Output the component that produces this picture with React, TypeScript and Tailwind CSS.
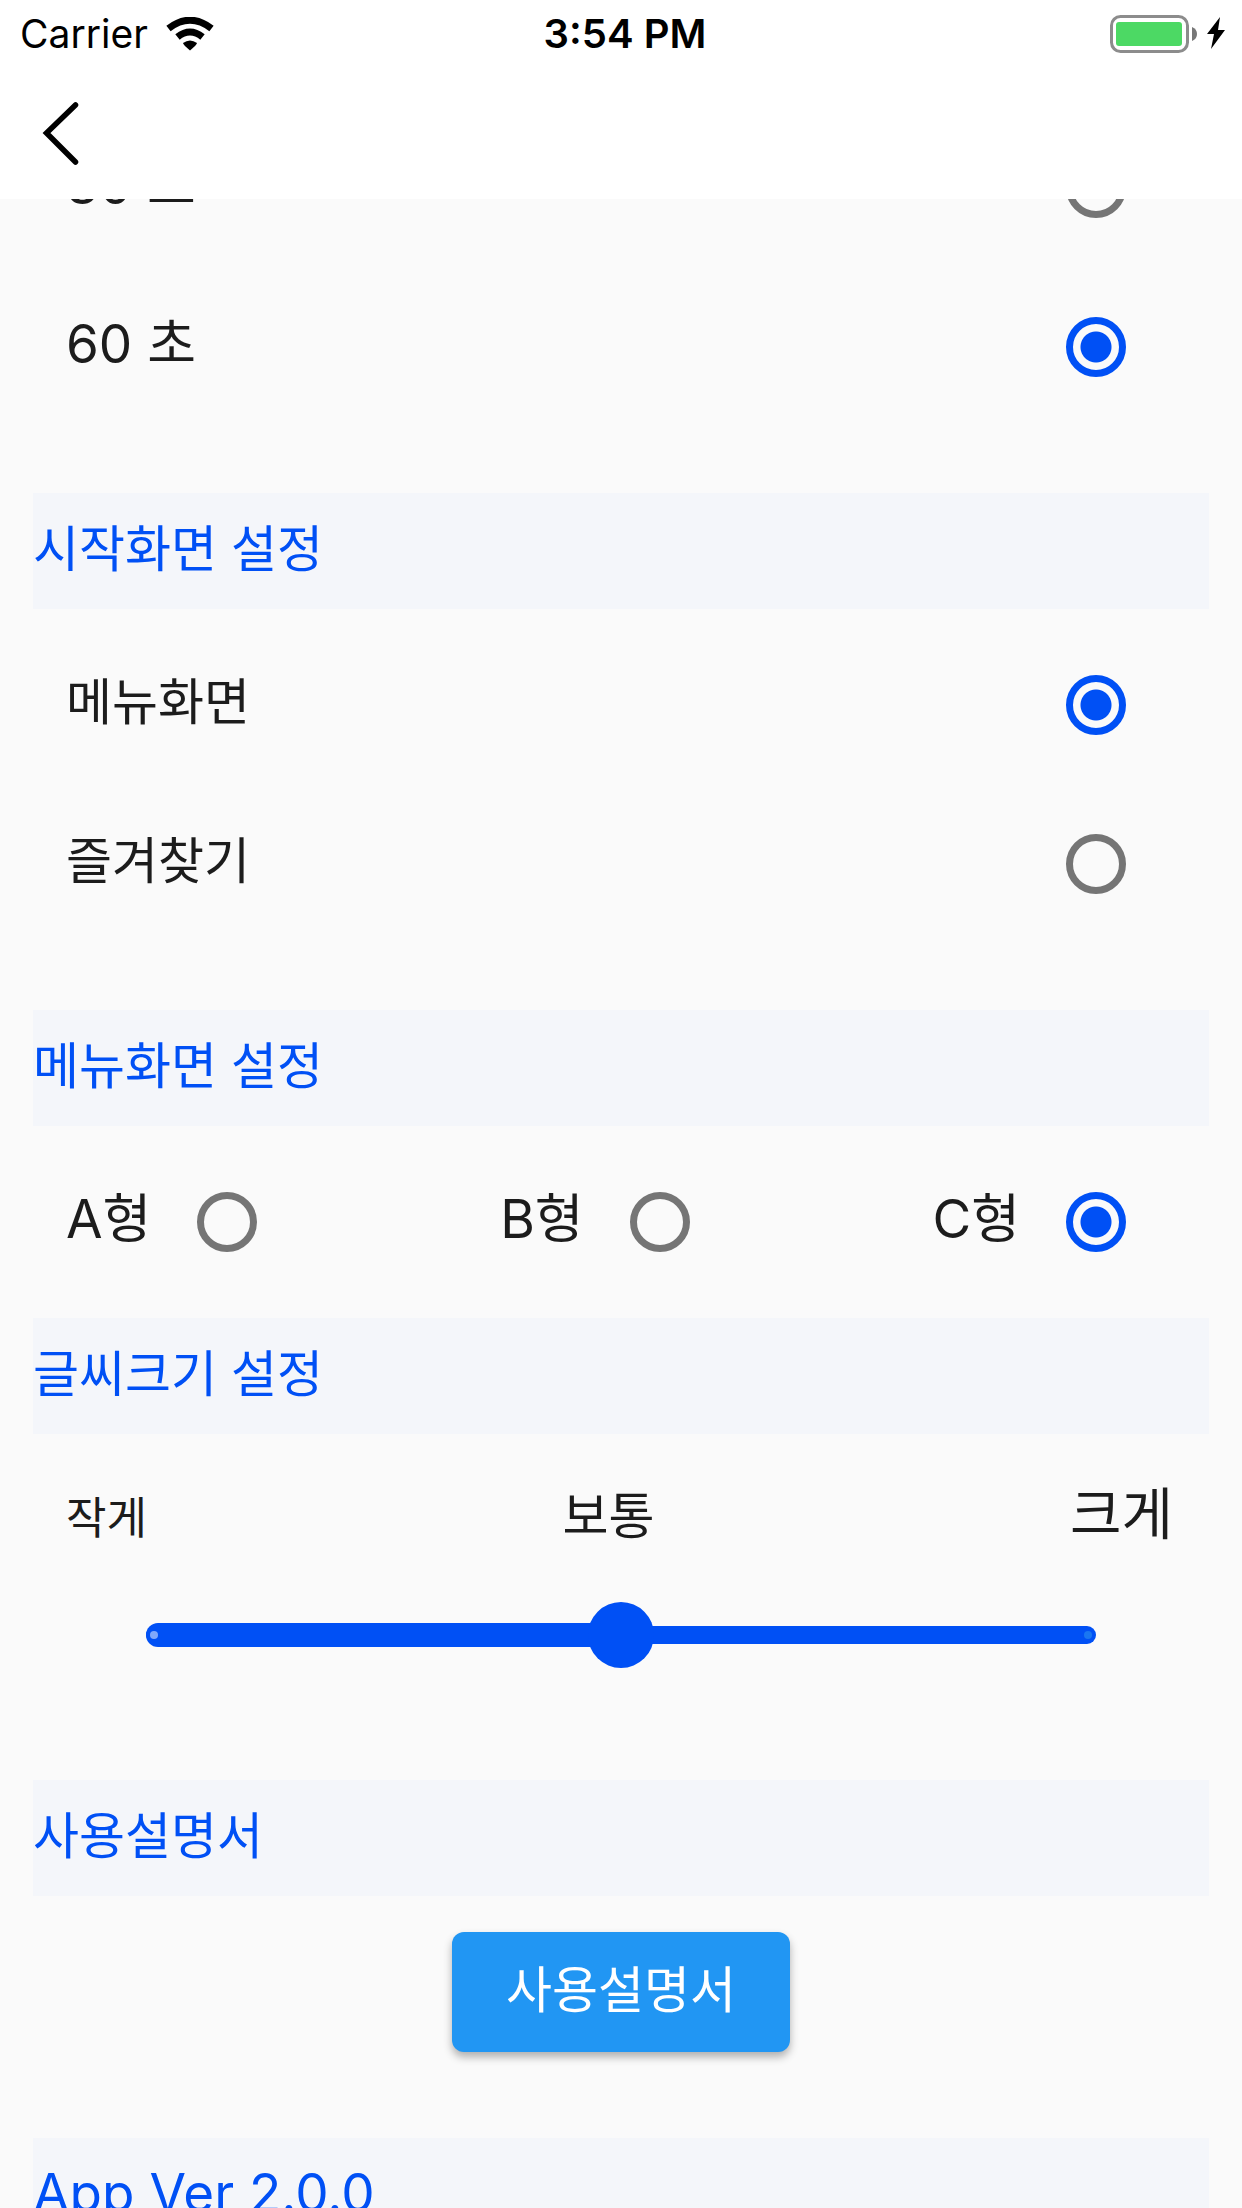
import { useState } from 'react'

type RadioProps = { name: string; label: string; checked: boolean; onSelect: () => void }

function Radio({ name, label, checked, onSelect }: RadioProps) {
    return (
        <input
            type="radio"
            name={name}
            value={label}
            checked={checked}
            onChange={onSelect}
            className="m-[42px] size-[60px] shrink-0 appearance-none rounded-full border-[7px] border-[#757575] checked:border-[#0050f5] checked:bg-[radial-gradient(circle,#0050f5_15px,transparent_16px)] bg-origin-border"
        />
    )
}

function RadioRow(props: RadioProps) {
    return (
        <label className="flex h-[159px] items-center justify-between pl-[33px] pr-[41px]">
            <span className="pb-1">{props.label}</span>
            <Radio {...props} />
        </label>
    )
}

function SectionTitle({ children }: { children: string }) {
    return <h2 className="flex h-[116px] items-center bg-[#f4f6fa] pb-1 text-[#0050f5]">{children}</h2>
}

function StatusBar() {
    return (
        <div className="grid h-[68px] grid-cols-3 items-center pl-5 pr-4 text-black">
            <div className="flex items-center gap-[18px] text-[39px]">
                <span>Carrier</span>
                <svg viewBox="0 0 48 34" className="h-[34px] w-12" fill="none" stroke="#000">
                    <path d="M2.5 11.5Q24 -5 45.500 11.5" strokeWidth="7" />
                    <path d="M11.500 20Q24 10 36.500 20" strokeWidth="7" />
                    <path d="M17 26Q24 21 31 26Q31 27.500 24 33.500Q17 27.500 17 26Z" fill="#000" stroke="none" />
                </svg>
            </div>
            <span className="pl-1 text-center text-[40px] font-semibold">3:54 PM</span>
            <svg viewBox="0 0 116 38" className="h-[38px] w-[116px] justify-self-end">
                <rect x="1.5" y="1.5" width="76" height="35" rx="9" fill="none" stroke="#8c8c8c" strokeWidth="3" />
                <rect x="6" y="7" width="66" height="24" rx="3" fill="#4cd964" />
                <path d="M82 12q5 2 5 7t-5 7z" fill="#777" />
                <path d="M110 2L97 19h7l-3 15 14-19h-7z" fill="#000" />
            </svg>
        </div>
    )
}

const timeouts = ['30 초', '60 초']
const startScreens = ['메뉴화면', '즐겨찾기']
const menuTypes = ['A형', 'B형', 'C형']

export default function App() {
    const [timeout, setTimeoutLabel] = useState('60 초')
    const [startScreen, setStartScreen] = useState('메뉴화면')
    const [menuType, setMenuType] = useState('C형')
    const [fontSize, setFontSize] = useState(1)

    return (
        <div className="flex h-screen flex-col overflow-hidden bg-[#fafafa] font-['Inter','Noto_Sans_CJK_KR',sans-serif] text-[#1c1c1c]">
            <header className="relative z-10 shrink-0 bg-white">
                <StatusBar />
                <div className="flex h-[131px] items-center px-10">
                    <button aria-label="Back" className="cursor-pointer">
                        <svg viewBox="0 0 42 64" className="h-16 w-[42px]" fill="none" stroke="#000" strokeWidth="5.5" strokeLinecap="round">
                            <path d="M35.5 3L6.500 31L35.500 60" />
                        </svg>
                    </button>
                </div>
            </header>

            {/* the list is scrolled, its first row slides under the header */}
            <main className="-mt-[91px] px-[33px] text-[50px]">
                <section className="pb-[67px] text-[53px]">
                    {timeouts.map((t) => (
                        <RadioRow key={t} name="timeout" label={t} checked={timeout === t} onSelect={() => setTimeoutLabel(t)} />
                    ))}
                </section>

                <section className="pb-[67px]">
                    <SectionTitle>시작화면 설정</SectionTitle>
                    <div className="pt-4">
                        {startScreens.map((s) => (
                            <RadioRow key={s} name="start" label={s} checked={startScreen === s} onSelect={() => setStartScreen(s)} />
                        ))}
                    </div>
                </section>

                <section className="pb-[17px]">
                    <SectionTitle>메뉴화면 설정</SectionTitle>
                    <div className="flex justify-between pl-[33px] pt-4 text-[53px]">
                        {menuTypes.map((m) => (
                            <label key={m} className="flex h-[159px] items-center gap-1 last:pr-[41px]">
                                <span className="pb-1">{m}</span>
                                <Radio name="menu" label={m} checked={menuType === m} onSelect={() => setMenuType(m)} />
                            </label>
                        ))}
                    </div>
                </section>

                <section className="pb-[112px]">
                    <SectionTitle>글씨크기 설정</SectionTitle>
                    <div className="flex h-[168px] items-baseline justify-between pt-[38px] pl-[33px] pr-9">
                        <span className="text-[44px]">작게</span>
                        <span className="text-[50px]">보통</span>
                        <span className="text-[56px]">크게</span>
                    </div>
                    <div className="grid items-center px-[88px] *:col-start-1 *:row-start-1">
                        <div className="mx-[25px] flex h-[18px] items-center justify-end rounded-full bg-[#0050f5] px-1">
                            <span className="size-2 rounded-full bg-[#1976f2]" />
                        </div>
                        <div className="mx-[25px]">
                            <div className="flex h-6 items-center rounded-full bg-[#0050f5] px-1" style={{ width: `${fontSize * 50}%` }}>
                                <span className="size-2 rounded-full bg-[#80a8fa]" />
                            </div>
                        </div>
                        <input
                            type="range"
                            min={0}
                            max={2}
                            value={fontSize}
                            onChange={(e) => setFontSize(Number(e.target.value))}
                            aria-label="글씨크기 설정"
                            className="h-[66px] w-full appearance-none bg-transparent [&::-webkit-slider-thumb]:size-[66px] [&::-webkit-slider-thumb]:appearance-none [&::-webkit-slider-thumb]:rounded-full [&::-webkit-slider-thumb]:bg-[#0050f5]"
                        />
                    </div>
                </section>

                <section className="pb-[86px]">
                    <SectionTitle>사용설명서</SectionTitle>
                    <div className="flex justify-center pt-9">
                        <button className="flex h-[120px] cursor-pointer items-center rounded-xl bg-[#2196f3] px-[54px] pb-1 text-white shadow-[0_5px_8px_rgba(0,0,0,0.3)]">
                            사용설명서
                        </button>
                    </div>
                </section>

                <section className="text-[53px]">
                    <SectionTitle>App Ver 2.0.0</SectionTitle>
                </section>
            </main>
        </div>
    )
}
